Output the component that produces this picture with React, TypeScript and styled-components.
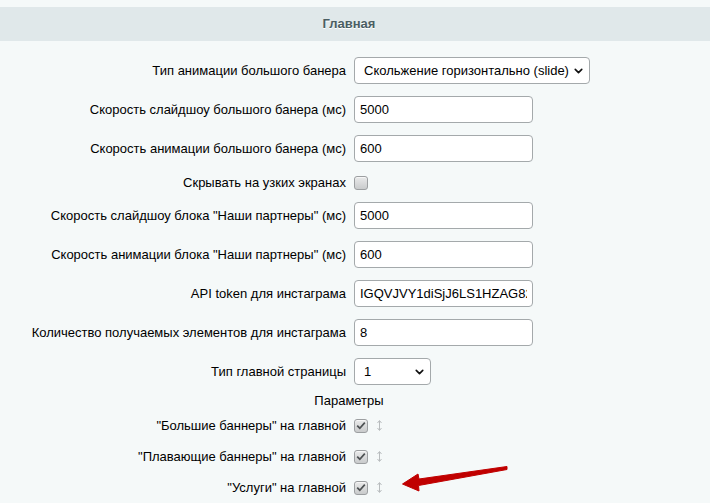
import { ChevronDown } from "lucide-react";
import styled, { createGlobalStyle } from "styled-components";

const GlobalStyle = createGlobalStyle`
	html, body {
		margin: 0;
		padding: 0;
		background: #f5f9f9;
	}

	body {
		font-family: "Liberation Sans", Arial, sans-serif;
		font-size: 13px;
		color: #000;
	}
`;

const Page = styled.div`
	position: relative;
	width: 710px;
	height: 503px;
	padding-top: 7px;
	box-sizing: border-box;
	overflow: hidden;
`;

const Heading = styled.div`
	height: 34px;
	line-height: 34px;
	background: #e0e8ea;
	padding-right: 12px;
	text-align: center;
	font-weight: bold;
	font-size: 13px;
	color: #4b5e63;
	text-shadow: 0 1px 0 #fff;
`;

const Form = styled.div`
	display: flex;
	flex-direction: column;
	padding-top: 10px;
`;

const Row = styled.div<{ $pad?: string }>`
	display: grid;
	grid-template-columns: 346px 1fr;
	column-gap: 8px;
	align-items: center;
	padding: ${({ $pad }) => $pad ?? "6px 0"};
`;

const Label = styled.div`
	text-align: right;
	white-space: nowrap;
`;

const Field = styled.div`
	display: flex;
	align-items: center;
	gap: 9px;
`;

const Section = styled.div`
	height: 19px;
	line-height: 19px;
	padding-right: 12px;
	text-align: center;
	color: #000;
`;

const TextInput = styled.input`
	box-sizing: border-box;
	width: 179px;
	height: 27px;
	padding: 0 5px;
	border: 1px solid #a4a9ab;
	border-radius: 4px;
	background: #fff;
	font: 13px "Liberation Sans", Arial, sans-serif;
	color: #000;
	outline: none;
`;

const SelectBox = styled.div<{ $width: number }>`
	position: relative;
	width: ${({ $width }) => $width}px;
`;

const Select = styled.select`
	appearance: none;
	box-sizing: border-box;
	width: 100%;
	height: 27px;
	padding: 0 16px 0 9px;
	border: 1px solid #a4a9ab;
	border-radius: 4px;
	background: #fff;
	font: 13px "Liberation Sans", Arial, sans-serif;
	color: #000;
	outline: none;
`;

const Chevron = styled(ChevronDown)`
	position: absolute;
	right: 5px;
	top: 50%;
	transform: translateY(-50%);
	pointer-events: none;
	color: #111;
`;

const Check = styled.span`
	display: inline-flex;
	align-items: center;
	justify-content: center;
	box-sizing: border-box;
	width: 14px;
	height: 14px;
	border: 1px solid #9c9fa1;
	border-radius: 3px;
	background: linear-gradient(#e9eaea, #c9cbcc);
	box-shadow: inset 0 1px 0 #f6f6f6;
`;

const Mover = styled.svg`
	display: block;
	flex: none;
`;

const Annotation = styled.svg`
	position: absolute;
	left: 398px;
	top: 460px;
	pointer-events: none;
`;

const CheckBox = ({ checked }: { checked?: boolean }) => (
	<Check>
		{checked && (
			<svg width="10" height="9" viewBox="0 0 10 9">
				<path
					d="M1.2 4.6 L3.8 7.2 L8.8 1.6"
					fill="none"
					stroke="#4e5254"
					strokeWidth="1.7"
				/>
			</svg>
		)}
	</Check>
);

const SortHandle = () => (
	<Mover width="5" height="11" viewBox="0 0 5 11">
		<path d="M2.5 1 V10" stroke="#b8bcbe" strokeWidth="1" />
		<path d="M0.5 3 L2.5 0.5 L4.5 3 M0.5 8 L2.5 10.5 L4.5 8" fill="none" stroke="#b8bcbe" strokeWidth="1" />
	</Mover>
);

const Dropdown = ({ width, value, options }: { width: number; value: string; options: string[] }) => (
	<SelectBox $width={width}>
		<Select defaultValue={value}>
			{options.map((o) => (
				<option key={o}>{o}</option>
			))}
		</Select>
		<Chevron size={13} strokeWidth={3} />
	</SelectBox>
);

const inputRows = [
	["Скорость слайдшоу большого банера (мс)", "5000"],
	["Скорость анимации большого банера (мс)", "600"],
];

const partnerRows = [
	['Скорость слайдшоу блока "Наши партнеры" (мс)', "5000"],
	['Скорость анимации блока "Наши партнеры" (мс)', "600"],
	["API token для инстаграма", "IGQVJVY1diSjJ6LS1HZAG82RmNzYlQ"],
	["Количество получаемых элементов для инстаграма", "8"],
];

const homeBlocks = [
	'"Большие баннеры" на главной',
	'"Плавающие баннеры" на главной',
	'"Услуги" на главной',
];

export default function App() {
	return (
		<>
			<GlobalStyle />
			<Page>
				<Heading>Главная</Heading>
				<Form>
					<Row>
						<Label>Тип анимации большого банера</Label>
						<Field>
							<Dropdown
								width={236}
								value="Скольжение горизонтально (slide)"
								options={["Скольжение горизонтально (slide)", "Затухание (fade)"]}
							/>
						</Field>
					</Row>
					{inputRows.map(([label, value]) => (
						<Row key={label}>
							<Label>{label}</Label>
							<Field>
								<TextInput defaultValue={value} />
							</Field>
						</Row>
					))}
					<Row $pad="7px 0 6px">
						<Label>Скрывать на узких экранах</Label>
						<Field>
							<CheckBox />
						</Field>
					</Row>
					{partnerRows.map(([label, value]) => (
						<Row key={label}>
							<Label>{label}</Label>
							<Field>
								<TextInput defaultValue={value} />
							</Field>
						</Row>
					))}
					<Row>
						<Label>Тип главной страницы</Label>
						<Field>
							<Dropdown width={77} value="1" options={["1", "2", "3"]} />
						</Field>
					</Row>
					<Section>Параметры</Section>
					{homeBlocks.map((label) => (
						<Row key={label} $pad="8px 0">
							<Label>{label}</Label>
							<Field>
								<CheckBox checked />
								<SortHandle />
							</Field>
						</Row>
					))}
				</Form>
				<Annotation width="112" height="34" viewBox="0 0 112 34">
					<path
						d="M109 6.5 L21 19 L20 14 L4.5 24 L21 31 L20.5 25.5 L109 9.5 Z"
						fill="#c00000"
						stroke="#c00000"
						strokeWidth="1"
						strokeLinejoin="round"
					/>
				</Annotation>
			</Page>
		</>
	);
}
